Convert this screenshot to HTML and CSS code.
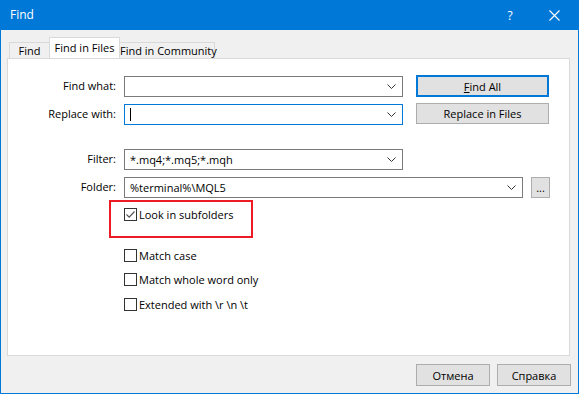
FILE: index.html
```html
<!DOCTYPE html>
<html>
<head>
<meta charset="utf-8">
<link rel="stylesheet" href="styles.css">
</head>
<body>
<div class="window">
  <div class="titlebar">
    <span class="title">Find</span>
    <span class="help">?</span>
    <span class="close"><svg width="11" height="11" viewBox="0 0 11 11"><path d="M0.5 0.5 L10.5 10.5 M10.5 0.5 L0.5 10.5" stroke="#fff" stroke-width="1.1" fill="none"/></svg></span>
  </div>
  <div class="client">
    <div class="tabs">
      <div class="tab t1">Find</div>
      <div class="tab active">Find in Files</div>
      <div class="tab t3">Find in Community</div>
    </div>
    <div class="panel">
      <div class="row r1">
        <label class="lbl">Find what:</label>
        <div class="combo"><span class="val"></span><svg class="chev" width="9" height="5" viewBox="0 0 9 5"><path d="M0.5 0.5 L4.5 4.5 L8.5 0.5" stroke="#333" stroke-width="1" fill="none"/></svg></div>
        <button class="btn default"><u>F</u>ind All</button>
      </div>
      <div class="row r2">
        <label class="lbl">Replace with:</label>
        <div class="combo focus"><span class="val"><span class="caret"></span></span><svg class="chev" width="9" height="5" viewBox="0 0 9 5"><path d="M0.5 0.5 L4.5 4.5 L8.5 0.5" stroke="#333" stroke-width="1" fill="none"/></svg></div>
        <button class="btn">Replace in Files</button>
      </div>
      <div class="row r3">
        <label class="lbl">Filter:</label>
        <div class="combo"><span class="val">*.mq4;*.mq5;*.mqh</span><svg class="chev" width="9" height="5" viewBox="0 0 9 5"><path d="M0.5 0.5 L4.5 4.5 L8.5 0.5" stroke="#333" stroke-width="1" fill="none"/></svg></div>
      </div>
      <div class="row r4">
        <label class="lbl">Folder:</label>
        <div class="combo wide"><span class="val">%terminal%\MQL5</span><svg class="chev" width="9" height="5" viewBox="0 0 9 5"><path d="M0.5 0.5 L4.5 4.5 L8.5 0.5" stroke="#333" stroke-width="1" fill="none"/></svg></div>
        <button class="btn dots">...</button>
      </div>
      <div class="checks">
        <div class="check c1 highlight"><span class="box"><svg width="11" height="11" viewBox="0 0 11 11"><path d="M1.5 5.5 L4.2 8.2 L9.5 2.5" stroke="#555" stroke-width="1.2" fill="none"/></svg></span><span class="ctext">Look in subfolders</span></div>
        <div class="check c2"><span class="box"></span><span class="ctext">Match case</span></div>
        <div class="check c3"><span class="box"></span><span class="ctext">Match whole word only</span></div>
        <div class="check c4"><span class="box"></span><span class="ctext">Extended with \r \n \t</span></div>
      </div>
    </div>
    <div class="footer">
      <button class="btn foot">Отмена</button>
      <button class="btn foot">Справка</button>
    </div>
  </div>
</div>
</body>
</html>
```
FILE: styles.css
```css
* { box-sizing: border-box; }
html, body { margin: 0; padding: 0; }
body { font-family: "Open Sans", "Noto Sans", sans-serif; font-size: 11px; color: #000; }
.window {
  width: 579px; height: 394px;
  border: 1px solid #0078d7; border-top: none;
  display: flex; flex-direction: column;
  background: #f0f0f0;
}
.titlebar {
  height: 30px; background: #0078d7; color: #fff;
  display: flex; align-items: center;
  margin: 0 -1px; padding: 0 0 0 10px;
}
.title { font-size: 12px; flex: 1; padding-bottom: 1px; }
.help { font-size: 12px; width: 44px; text-align: center; margin-right: 1px; }
.close { width: 46px; display: flex; justify-content: center; align-items: center; padding-right: 3px; }
.close svg { display: block; }
.client { flex: 1; display: flex; flex-direction: column; padding: 7px 0 0 0; }
.tabs { display: flex; align-items: flex-end; height: 21px; padding-left: 8px; }
.tab {
  height: 16px; border: 1px solid #d9d9d9; border-bottom: none;
  background: #f0f0f0; line-height: 15px; white-space: nowrap;
  margin-left: -1px; text-align: center;
}
.tab.t1 { width: 41px; margin-left: 0; }
.tab.active { height: 21px; width: 71px; background: #fff; line-height: 19px; position: relative; z-index: 1; }
.tab.t3 { width: 96px; }
.panel {
  margin-left: 6px; width: 563px; height: 298px;
  background: #fff; border: 1px solid #d9d9d9;
  padding-top: 17px;
}
.row { display: flex; align-items: flex-start; height: 21px; }
.r2 { margin-top: 7px; }
.r3 { margin-top: 24px; }
.r4 { margin-top: 7px; }
.lbl { width: 108px; text-align: right; margin-right: 8px; line-height: 20px; }
.combo {
  width: 279px; height: 21px; border: 1px solid #7a7a7a; background: #fff;
  display: flex; align-items: center; padding-left: 5px; padding-right: 6px;
}
.combo.focus { border-color: #0078d7; }
.combo.wide { width: 399px; }
.val { flex: 1; white-space: nowrap; display: flex; align-items: center; }
.caret { display: block; width: 1px; height: 13px; background: #000; }
.chev { display: block; flex: none; }
.btn {
  font-family: inherit; font-size: 11px; color: #000;
  background: #e1e1e1; border: 1px solid #adadad;
  width: 133px; height: 21px; padding: 0; margin: -1px 0 0 13px;
}
.btn.default { border: 2px solid #0078d7; height: 22px; margin-top: -1px; }
.btn.dots { width: 19px; height: 21px; margin: 0 0 0 8px; line-height: 12px; }
.checks { margin-top: 9px; padding-left: 116px; display: flex; flex-direction: column; }
.check { display: flex; align-items: center; height: 15px; }
.c1 { position: relative; }
.c1.highlight::before {
  content: ""; position: absolute; left: -15px; top: -7px;
  width: 140px; height: 34px; border: 2px solid #ed1c24;
}
.c2 { margin-top: 26px; }
.c3 { margin-top: 9px; }
.c4 { margin-top: 10px; }
.box {
  width: 13px; height: 13px; border: 1px solid #333; background: #fff;
  display: flex; align-items: center; justify-content: center; flex: none;
}
.box svg { display: block; }
.ctext { margin-left: 2px; white-space: nowrap; }
.footer { display: flex; justify-content: flex-end; padding: 8px 7px 0 0; }
.btn.foot { width: 74px; height: 22px; margin: 0 0 0 7px; }
```
